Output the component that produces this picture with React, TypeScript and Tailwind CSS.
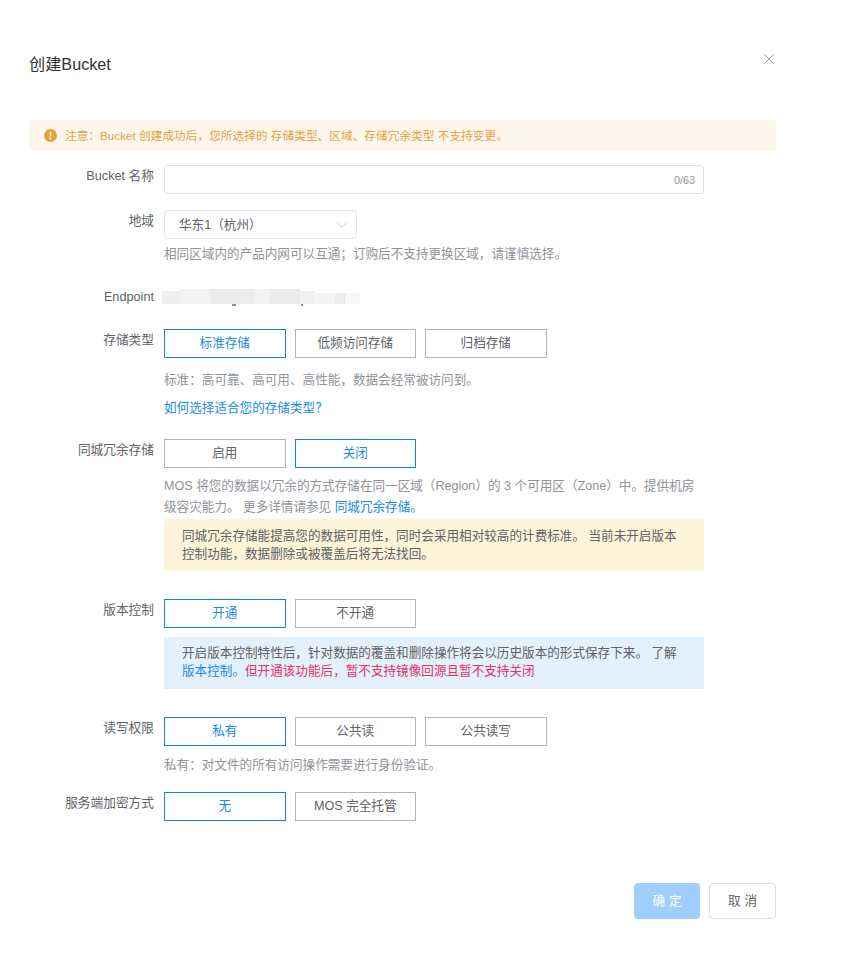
import { ReactNode } from "react";
import { ChevronDown, X } from "lucide-react";

function Row({ label, children, className = "" }: { label: string; children: ReactNode; className?: string }) {
  return (
    <div className={`flex ${className}`}>
      <div className="w-[125px] shrink-0 pt-[1px] text-right text-[12.7px] leading-[21px] text-[#606266]">{label}</div>
      <div className="ml-[10px] w-[540px] shrink-0">{children}</div>
    </div>
  );
}

function Opt({ text, active = false }: { text: string; active?: boolean }) {
  return (
    <button
      className={`h-[29px] w-[121.5px] border text-center text-[12.6px] leading-[27px] ${
        active ? "border-[#0a84dc] text-[#1a8ce6]" : "border-[#b4b4b4] text-[#606266]"
      }`}
    >
      {text}
    </button>
  );
}

function Help({ children, className = "" }: { children: ReactNode; className?: string }) {
  return <div className={`text-[12.6px] leading-[21px] text-[#909399] ${className}`}>{children}</div>;
}

// the reference has its endpoint address smeared out, so these are just the smear
const smear = [
  "h-[13px] w-[18px] bg-[#efefef]",
  "h-[15px] w-[30px] bg-[#f2f3f4]",
  "h-[15px] w-[15px] bg-[#ebebeb]",
  "h-[15px] w-[15px] bg-[#e9ebed]",
  "h-[15px] w-[15px] bg-[#ebecec]",
  "h-[15px] w-[15px] bg-[#f2f2f2]",
  "h-[15px] w-[30px] bg-[#e9eaeb]",
  "h-[13px] w-[15px] bg-[#eff0f1]",
  "h-[11px] w-[20px] bg-[#f2f4f6]",
  "h-[11px] w-[10px] bg-[#ebeded]",
  "h-[11px] w-[15px] bg-[#f8f8f8]",
];

export default function App() {
  return (
    <div className="min-h-[967px] w-[854px] bg-white pl-[29px] pt-[52px] font-['Liberation_Sans','Noto_Sans_CJK_SC',sans-serif]">
      <div className="relative w-[747px]">
        <h2 className="text-[16.2px] leading-[25px] text-[#303133]">创建Bucket</h2>
        <button className="absolute right-[-1.5px] top-[-2.5px] text-[#909399]">
          <X size={18} strokeWidth={1.2} />
        </button>

        <div className="mt-[43px] flex h-[31px] items-center rounded-[4px] bg-[#fdf6ec] pl-[15px] text-[11.7px] text-[#e6a23c]">
          <svg viewBox="0 0 14 14" className="mr-[8px] h-[13px] w-[13px] shrink-0">
            <circle cx="7" cy="7" r="7" fill="#e6a23c" />
            <rect x="6.2" y="3" width="1.6" height="5.2" rx="0.6" fill="#fff" />
            <circle cx="7" cy="10.2" r="1" fill="#fff" />
          </svg>
          注意：Bucket 创建成功后，您所选择的 存储类型、区域、存储冗余类型 不支持变更。
        </div>

        <Row label="Bucket 名称" className="mt-[14px]">
          <div className="flex h-[29px] items-center justify-end rounded-[4px] border border-[#dcdfe6] pr-[8px] text-[10.8px] text-[#909399]">
            <span className="pt-[1px]">0/63</span>
          </div>
        </Row>

        <Row label="地域" className="mt-[16px]">
          <div className="flex h-[29px] w-[193px] items-center justify-between rounded-[4px] border border-[#e4e7ed] pl-[14px] pr-[5px] text-[12.6px] text-[#606266]">
            <span className="pt-[1px]">华东1（杭州）</span>
            <ChevronDown size={18} strokeWidth={1} className="text-[#c0c4cc]" />
          </div>
          <Help className="mt-[4px] pt-[1px]">相同区域内的产品内网可以互通；订购后不支持更换区域，请谨慎选择。</Help>
        </Row>

        <Row label="Endpoint" className="mt-[21px]">
          <div className="relative ml-[-2px] flex h-[22px] items-end pb-[4px] blur-[0.6px]">
            {smear.map((c, i) => (
              <div key={i} className={c} />
            ))}
            <div className="absolute bottom-[2px] left-[70px] h-[2px] w-[4px] bg-[#8a8f94]" />
            <div className="absolute bottom-[2px] left-[139px] h-[2px] w-[2px] bg-[#8a8f94]" />
          </div>
        </Row>

        <Row label="存储类型" className="mt-[21px]">
          <div className="flex gap-[9px]">
            <Opt text="标准存储" active />
            <Opt text="低频访问存储" />
            <Opt text="归档存储" />
          </div>
          <Help className="mt-[12px]">标准：高可靠、高可用、高性能，数据会经常被访问到。</Help>
          <div className="mt-[7px] text-[12.6px] leading-[21px] text-[#1a8ce6]">如何选择适合您的存储类型？</div>
        </Row>

        <Row label="同城冗余存储" className="mt-[20px]">
          <div className="flex gap-[9px]">
            <Opt text="启用" />
            <Opt text="关闭" active />
          </div>
          <Help className="mt-[8px]">
            MOS 将您的数据以冗余的方式存储在同一区域（Region）的 3 个可用区（Zone）中。提供机房级容灾能力。 更多详情请参见{" "}
            <span className="text-[#1a8ce6]">同城冗余存储。</span>
          </Help>
          <div className="mt-[1px] h-[52px] bg-[#fdf4d9] px-[18px] pt-[8px] text-[12.6px] leading-[18px] text-[#606266]">
            同城冗余存储能提高您的数据可用性，同时会采用相对较高的计费标准。 当前未开启版本控制功能，数据删除或被覆盖后将无法找回。
          </div>
        </Row>

        <Row label="版本控制" className="mt-[28px]">
          <div className="flex gap-[9px]">
            <Opt text="开通" active />
            <Opt text="不开通" />
          </div>
          <div className="mt-[9px] h-[52px] bg-[#e3f1fc] px-[18px] pt-[7px] text-[12.6px] leading-[18px] text-[#606266]">
            开启版本控制特性后，针对数据的覆盖和删除操作将会以历史版本的形式保存下来。 了解
            <span className="text-[#1a8ce6]">版本控制。</span>
            <span className="text-[#e6306b]">但开通该功能后，暂不支持镜像回源且暂不支持关闭</span>
          </div>
        </Row>

        <Row label="读写权限" className="mt-[28px]">
          <div className="flex gap-[9px]">
            <Opt text="私有" active />
            <Opt text="公共读" />
            <Opt text="公共读写" />
          </div>
          <Help className="mt-[8px] pt-[1px]">私有：对文件的所有访问操作需要进行身份验证。</Help>
        </Row>

        <Row label="服务端加密方式" className="mt-[16px]">
          <div className="flex gap-[9px]">
            <Opt text="无" active />
            <Opt text="MOS 完全托管" />
          </div>
        </Row>

        <div className="mt-[62px] flex justify-end gap-[9px]">
          <button className="h-[36px] w-[66px] rounded-[4px] bg-[#a0cfff] pl-[4px] text-[12.6px] tracking-[4px] text-white">确定</button>
          <button className="h-[36px] w-[67px] rounded-[4px] border border-[#dcdfe6] pl-[4px] text-[12.6px] tracking-[4px] text-[#606266]">取消</button>
        </div>
      </div>
    </div>
  );
}
